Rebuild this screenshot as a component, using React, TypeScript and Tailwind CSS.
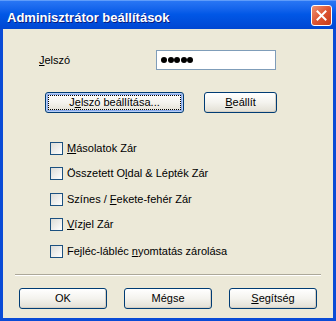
import type { ReactNode } from "react";

function XpButton({ children, width, focused }: { children: ReactNode; width: string; focused?: boolean }) {
  return (
    <button
      className={`${width} h-[21px] rounded-[3px] border border-[#003C74] bg-gradient-to-b from-white via-[#F4F3EE] to-[#E2DFD4] text-[11px] text-black flex items-center justify-center p-[2px] ${
        focused ? "shadow-[inset_0_0_0_1px_#B7CEF5,inset_0_0_0_2px_#88A9EC]" : "shadow-[inset_-1px_-1px_0_#D6D0C5]"
      }`}
    >
      <span
        className={`w-full h-full flex items-center justify-center leading-none ${
          focused ? "border border-dotted border-black" : ""
        }`}
      >
        {children}
      </span>
    </button>
  );
}

function CheckRow({ children, className }: { children: ReactNode; className?: string }) {
  return (
    <div className={`flex items-center h-[13px] pl-[47px] ${className ?? ""}`}>
      <span className="w-[13px] h-[13px] border border-[#1C5180] bg-gradient-to-br from-[#DCDCD7] to-white shrink-0" />
      <span className="ml-[4px] text-[11px] leading-none text-black">{children}</span>
    </div>
  );
}

export default function App() {
  return (
    <div className="w-[336px] h-[321px] bg-[#0A4BD6] flex flex-col font-['Liberation_Sans',Arial,sans-serif] select-none">
      {/* Title bar */}
      <div className="h-[29px] shrink-0 flex items-start justify-between pl-[7px] pr-[4px] bg-gradient-to-b from-[#2B78F5] via-[#0157E6] to-[#0046D2] shadow-[inset_0_1px_0_#5F9CFA]">
        <span className="mt-[8px] text-[13px] font-bold text-white tracking-[0px] [text-shadow:1px_1px_0_#0A1C7E]">
          Adminisztrátor beállítások
        </span>
        <div className="mt-[5px] w-[21px] h-[21px] rounded-[3px] border border-white bg-gradient-to-br from-[#EE9272] via-[#DD5533] to-[#C73A18] flex items-center justify-center">
          <svg width="11" height="11" viewBox="0 0 11 11">
            <path d="M1.5 1.5 L9.5 9.5 M9.5 1.5 L1.5 9.5" stroke="white" strokeWidth="2" strokeLinecap="square" />
          </svg>
        </div>
      </div>

      {/* Body */}
      <div className="flex-1 mx-[3px] mb-[3px] bg-[#ECE9D8] flex flex-col text-black">
        <div className="mt-[21px] h-[20px] flex items-center pl-[36px]">
          <span className="w-[117px] text-[11px] leading-none">
            <u className="underline-offset-[1px]">J</u>elszó
          </span>
          <div className="w-[120px] h-[20px] bg-white border border-[#7F9DB9] flex items-center pl-[4px] gap-[0.5px]">
            {[0, 1, 2, 3, 4].map((i) => (
              <span key={i} className="w-[6px] h-[6px] rounded-full bg-black" />
            ))}
          </div>
        </div>

        <div className="mt-[22px] flex pl-[42px] gap-[20px]">
          <XpButton width="w-[139px]" focused>
            J<u className="underline-offset-[1px]">e</u>lszó beállítása...
          </XpButton>
          <XpButton width="w-[73px]">
            <u className="underline-offset-[1px]">B</u>eállít
          </XpButton>
        </div>

        <CheckRow className="mt-[29px]">
          <u className="underline-offset-[1px]">M</u>ásolatok Zár
        </CheckRow>
        <CheckRow className="mt-[12px]">
          Összetett O<u className="underline-offset-[1px]">l</u>dal &amp; Lépték Zár
        </CheckRow>
        <CheckRow className="mt-[13px]">
          Színes / <u className="underline-offset-[1px]">F</u>ekete-fehér Zár
        </CheckRow>
        <CheckRow className="mt-[12px]">
          <u className="underline-offset-[1px]">V</u>ízjel Zár
        </CheckRow>
        <CheckRow className="mt-[14px]">
          Fejléc-lábléc <u className="underline-offset-[1px]">n</u>yomtatás zárolása
        </CheckRow>

        <div className="mt-[16px] mx-[12px] h-[2px] border-t border-[#ACA899] border-b border-b-white" />

        <div className="mt-[12px] flex pl-[16px] gap-[17px]">
          <XpButton width="w-[88px]">OK</XpButton>
          <XpButton width="w-[88px]">Mégse</XpButton>
          <XpButton width="w-[88px]">
            <u className="underline-offset-[1px]">S</u>egítség
          </XpButton>
        </div>
      </div>
    </div>
  );
}
